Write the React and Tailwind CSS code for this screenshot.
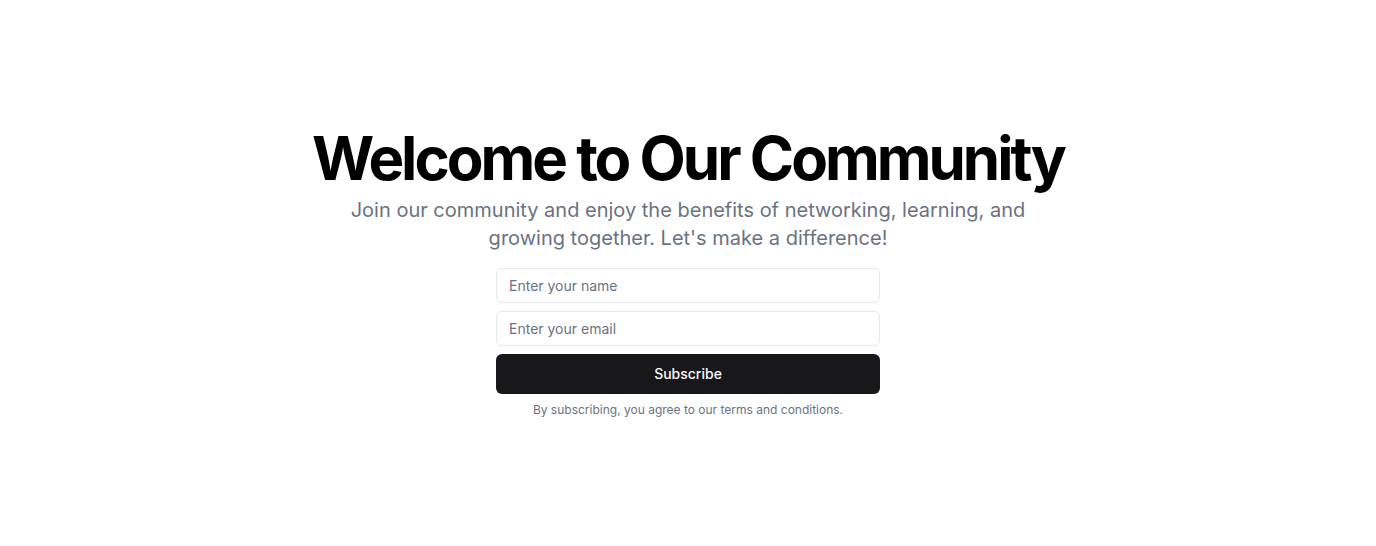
export default function App() {
  return (
    <div
      className="flex h-screen w-full items-center justify-center bg-white"
      style={{ fontFamily: "Inter, 'Liberation Sans', sans-serif" }}
    >
      <div className="flex flex-col items-center text-center">
        <h1 className="text-[60px] font-bold leading-[60px] tracking-tighter text-black">
          Welcome to Our Community
        </h1>
        <p className="mt-2 max-w-[700px] text-xl leading-7 text-gray-500">
          Join our community and enjoy the benefits of networking, learning, and growing together. Let's make a difference!
        </p>
        <form className="mt-4 flex w-[384px] flex-col gap-2" onSubmit={(e) => e.preventDefault()}>
          <input
            type="text"
            placeholder="Enter your name"
            className="h-[35px] w-full rounded-md border border-gray-200 bg-white px-3 text-sm text-gray-900 placeholder:text-gray-500 outline-none"
          />
          <input
            type="email"
            placeholder="Enter your email"
            className="h-[35px] w-full rounded-md border border-gray-200 bg-white px-3 text-sm text-gray-900 placeholder:text-gray-500 outline-none"
          />
          <button
            type="submit"
            className="h-10 w-full rounded-md bg-[#18181b] text-sm font-medium text-gray-50"
          >
            Subscribe
          </button>
        </form>
        <p className="mt-2 text-xs leading-4 text-gray-500">
          By subscribing, you agree to our terms and conditions.
        </p>
      </div>
    </div>
  );
}
